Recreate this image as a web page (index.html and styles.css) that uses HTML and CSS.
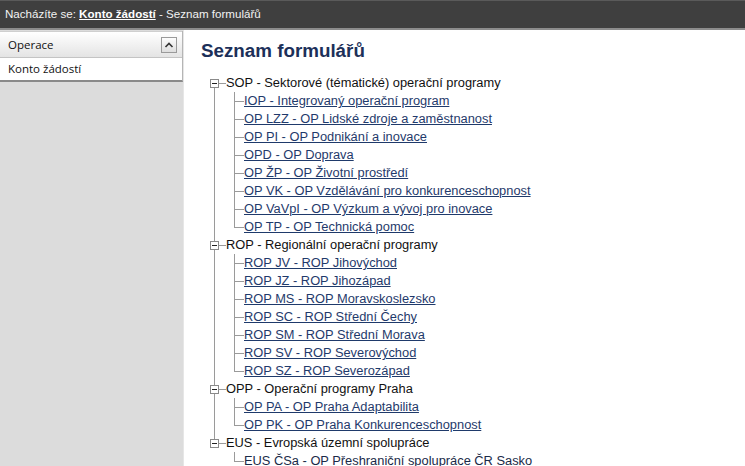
FILE: index.html
```html
<!DOCTYPE html>
<html lang="cs">
<head>
<meta charset="utf-8">
<title>Seznam formulářů</title>
<link rel="stylesheet" href="styles.css">
</head>
<body>
<div class="topbar">Nacházíte se: <a href="#" class="crumb">Konto žádostí</a> - Seznam formulářů</div>
<div class="layout">
  <aside class="sidebar">
    <div class="panel">
      <div class="panel-head">
        <span>Operace</span>
        <span class="collapse"><svg width="10" height="8" viewBox="0 0 10 8"><path d="M1.5 6 L5 2.5 L8.5 6" fill="none" stroke="#333" stroke-width="1.6"/></svg></span>
      </div>
      <div class="panel-item">Konto žádostí</div>
    </div>
  </aside>
  <main class="content">
    <h1 class="title">Seznam formulářů</h1>
    <ul class="tree">
      <li class="group">
        <div class="node"><span class="box"></span>SOP - Sektorové (tématické) operační programy</div>
        <ul class="children">
          <li><a href="#">IOP - Integrovaný operační program</a></li>
          <li><a href="#">OP LZZ - OP Lidské zdroje a zaměstnanost</a></li>
          <li><a href="#">OP PI - OP Podnikání a inovace</a></li>
          <li><a href="#">OPD - OP Doprava</a></li>
          <li><a href="#">OP ŽP - OP Životní prostředí</a></li>
          <li><a href="#">OP VK - OP Vzdělávání pro konkurenceschopnost</a></li>
          <li><a href="#">OP VaVpI - OP Výzkum a vývoj pro inovace</a></li>
          <li><a href="#">OP TP - OP Technická pomoc</a></li>
        </ul>
      </li>
      <li class="group">
        <div class="node"><span class="box"></span>ROP - Regionální operační programy</div>
        <ul class="children">
          <li><a href="#">ROP JV - ROP Jihovýchod</a></li>
          <li><a href="#">ROP JZ - ROP Jihozápad</a></li>
          <li><a href="#">ROP MS - ROP Moravskoslezsko</a></li>
          <li><a href="#">ROP SC - ROP Střední Čechy</a></li>
          <li><a href="#">ROP SM - ROP Střední Morava</a></li>
          <li><a href="#">ROP SV - ROP Severovýchod</a></li>
          <li><a href="#">ROP SZ - ROP Severozápad</a></li>
        </ul>
      </li>
      <li class="group">
        <div class="node"><span class="box"></span>OPP - Operační programy Praha</div>
        <ul class="children">
          <li><a href="#">OP PA - OP Praha Adaptabilita</a></li>
          <li><a href="#">OP PK - OP Praha Konkurenceschopnost</a></li>
        </ul>
      </li>
      <li class="group">
        <div class="node"><span class="box"></span>EUS - Evropská územní spolupráce</div>
        <ul class="children">
          <li><span class="plain">EUS ČSa - OP Přeshraniční spolupráce ČR Sasko</span></li>
        </ul>
      </li>
    </ul>
  </main>
</div>
</body>
</html>
```
FILE: styles.css
```css
html, body {
  margin: 0;
  padding: 0;
  height: 100%;
  overflow: hidden;
  background: #fff;
}
body {
  font-family: "Liberation Sans", Arial, sans-serif;
  color: #111;
}
.topbar {
  height: 27px;
  line-height: 26px;
  background: #3f3f3f;
  border-top: 1px solid #5a5a5a;
  border-bottom: 2px solid #8c8c8c;
  color: #f2f2f2;
  font-size: 11.6px;
  padding-left: 5px;
  box-sizing: content-box;
}
.crumb {
  color: #fff;
  font-weight: bold;
  text-decoration: underline;
}
.layout {
  display: flex;
  height: calc(100% - 30px);
}
.sidebar {
  width: 183px;
  flex: none;
  background: #dcdcdc;
  border-right: 1px solid #e6e6e6;
  padding-top: 1px;
}
.panel {
  border-right: 1px solid #b5b5b5;
  border-bottom: 2px solid #8a8a8a;
  font-family: "Open Sans", "DejaVu Sans", sans-serif;
  font-size: 11.5px;
  color: #111;
}
.panel-head {
  height: 25px;
  display: flex;
  align-items: center;
  justify-content: space-between;
  padding: 0 5px 0 8px;
  background: linear-gradient(#ffffff, #e4e4e4);
  border-top: 1px solid #cfcfcf;
  border-bottom: 1px solid #c4c4c4;
}
.collapse {
  width: 14px;
  height: 14px;
  border: 1px solid #9a9a9a;
  background: linear-gradient(#fdfdfd, #dedede);
  display: flex;
  align-items: center;
  justify-content: center;
}
.panel-item {
  height: 22px;
  line-height: 22px;
  padding-left: 8px;
  background: #fff;
}
.content {
  flex: 1;
  padding-left: 17px;
}
.title {
  margin: 10px 0 12px 0;
  font-size: 18.8px;
  font-weight: bold;
  color: #1c3059;
  line-height: 22px;
}
.tree, .children {
  list-style: none;
  margin: 0;
  padding: 0;
}
.tree {
  margin-left: 9px;
  font-size: 12.85px;
}
.group {
  position: relative;
}
.group::before {
  content: "";
  position: absolute;
  left: 4px;
  top: 13px;
  bottom: -5px;
  border-left: 1px solid #9a9a9a;
}
.group:last-child::before {
  display: none;
}
.node {
  height: 18px;
  line-height: 18px;
  display: flex;
  align-items: center;
  color: #111;
}
.box {
  position: relative;
  width: 7px;
  height: 7px;
  border: 1px solid #8a8a8a;
  background: #fff;
  flex: none;
}
.box::before {
  content: "";
  position: absolute;
  left: 1px;
  top: 3px;
  width: 5px;
  height: 1px;
  background: #222;
}
.box::after {
  content: "";
  position: absolute;
  left: 8px;
  top: 3px;
  width: 7px;
  height: 1px;
  background: #9a9a9a;
}
.node .box {
  margin-right: 7px;
}
.children {
  margin-left: 24px;
  position: relative;
}
.children li {
  position: relative;
  height: 18px;
  line-height: 18px;
  padding-left: 10px;
}
.children li::before {
  content: "";
  position: absolute;
  left: 0;
  top: 0;
  height: 9px;
  width: 9px;
  border-left: 1px solid #9a9a9a;
  border-bottom: 1px solid #9a9a9a;
}
.children li::after {
  content: "";
  position: absolute;
  left: 0;
  top: 9px;
  bottom: 0;
  border-left: 1px solid #9a9a9a;
}
.children li:last-child::after {
  display: none;
}
.children a {
  color: #1f3a6b;
  text-decoration: underline;
}
.plain {
  color: #1a2a48;
}
```
